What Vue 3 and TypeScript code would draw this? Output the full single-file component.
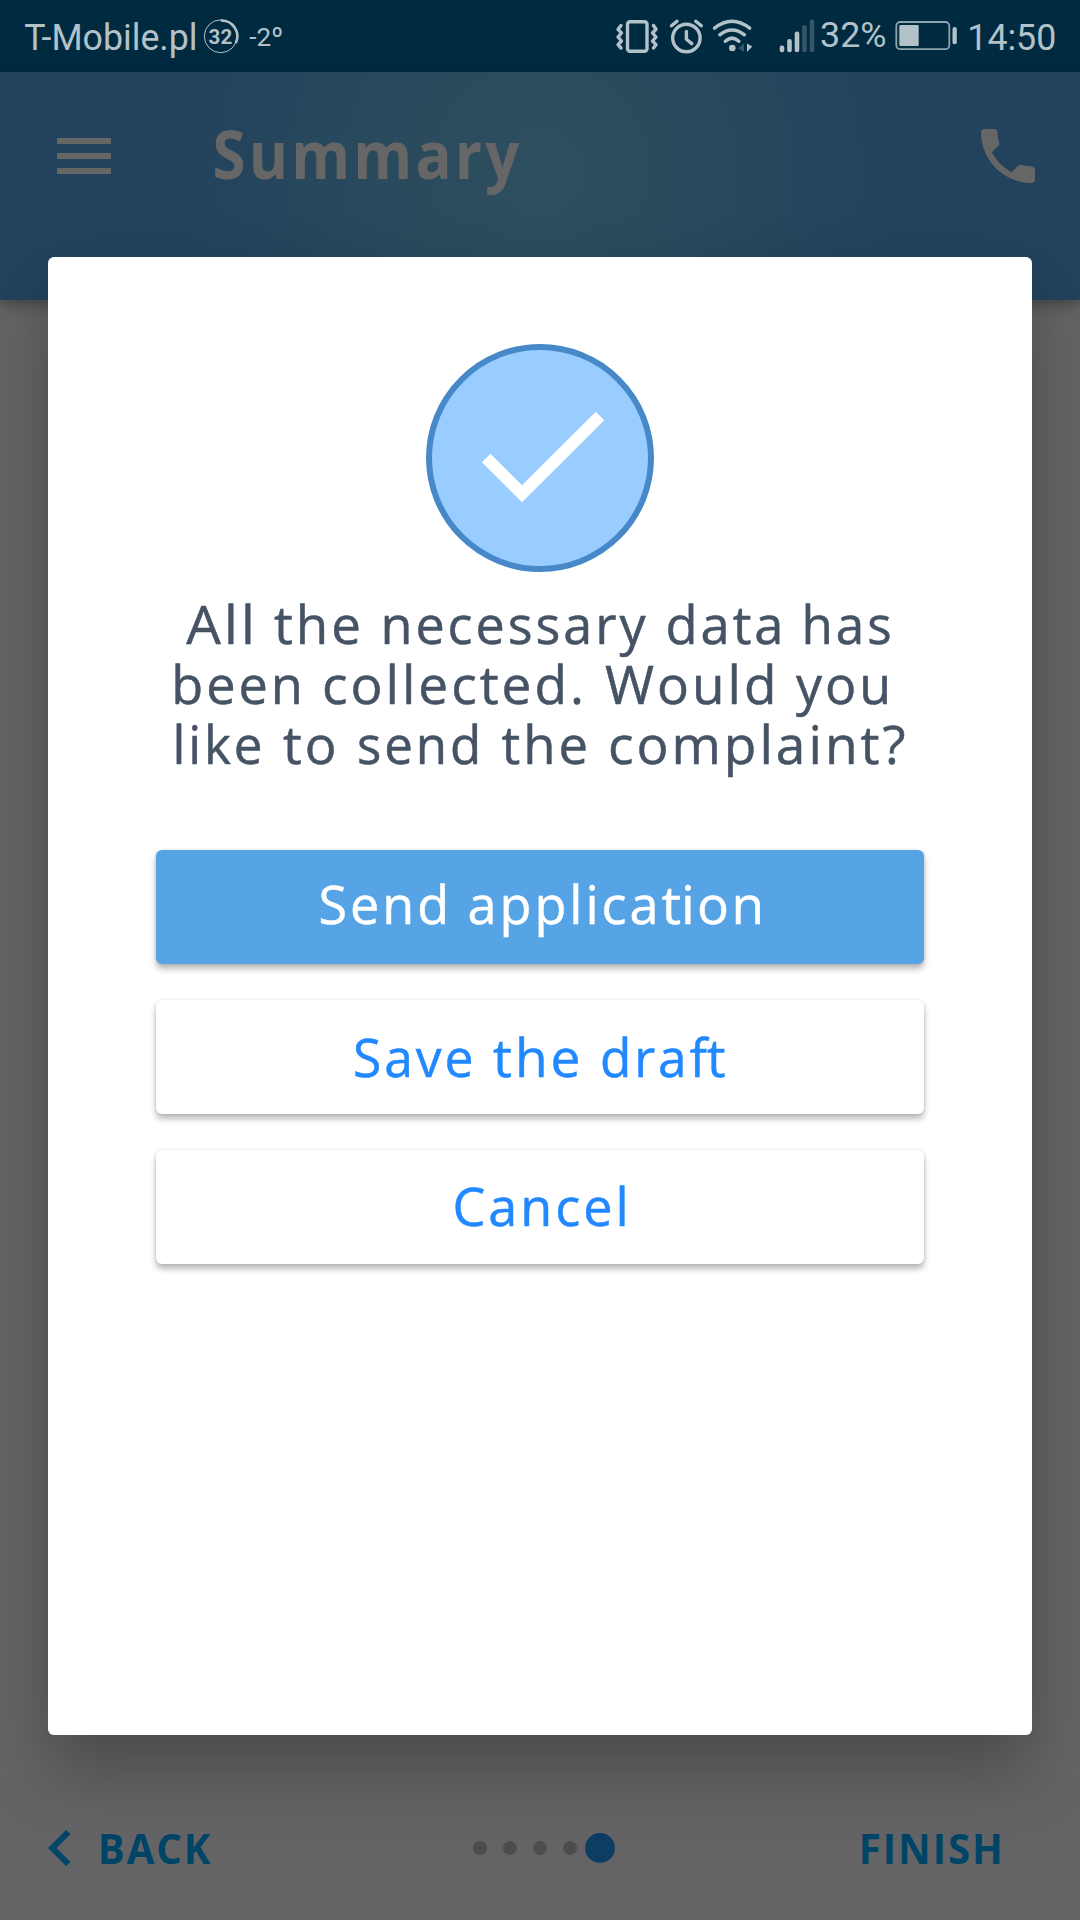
<script setup lang="ts">
import { h, type FunctionalComponent } from 'vue'

interface Word {
  t: string
  x: number
  w: number
  ls?: number
}

interface Line {
  y: number
  words: Word[]
}

interface FitTextProps {
  box: [number, number, number, number]
  lines: Line[]
}

// Text set word by word to a fixed measure, so it keeps its width in any fallback font.
const FitText: FunctionalComponent<FitTextProps> = (props) =>
  h(
    'svg',
    { viewBox: props.box.join(' '), width: props.box[2], height: props.box[3] },
    props.lines.map((line) =>
      h(
        'text',
        { y: line.y },
        line.words.map((word, i) => [
          i > 0 && word.ls === undefined ? ' ' : '',
          h(
            'tspan',
            {
              x: word.x,
              textLength: word.w,
              lengthAdjust: 'spacingAndGlyphs',
              'letter-spacing': word.ls,
            },
            word.t,
          ),
        ]),
      ),
    ),
  )
FitText.props = ['box', 'lines']

const message: Line[] = [
  {
    y: 644,
    words: [
      { t: 'All', x: 186.3, w: 71.5 },
      { t: 'the', x: 274, w: 90 },
      { t: 'necessary', x: 380.5, w: 268 },
      { t: 'data', x: 665.5, w: 121 },
      { t: 'has', x: 801.5, w: 93 },
    ],
  },
  {
    y: 704,
    words: [
      { t: 'been', x: 171.3, w: 134.5 },
      { t: 'collected.', x: 322, w: 265 },
      { t: 'Would', x: 605, w: 174.5 },
      { t: 'you', x: 796, w: 98 },
    ],
  },
  {
    y: 764,
    words: [
      { t: 'like', x: 172.5, w: 93 },
      { t: 'to', x: 283, w: 56.5 },
      { t: 'send', x: 357, w: 127 },
      { t: 'the', x: 501.5, w: 89.5 },
      { t: 'complaint?', x: 608, w: 300.5 },
    ],
  },
]

interface Action {
  id: string
  primary: boolean
  top: number
  line: Line
}

const actions: Action[] = [
  {
    id: 'send',
    primary: true,
    top: 850,
    line: {
      y: 924,
      words: [
        { t: 'Send', x: 318.5, w: 133.5 },
        { t: 'applica', x: 467.5, w: 194 },
        { t: 'ti', x: 661.5, w: 33.5, ls: 0 },
        { t: 'on', x: 697, w: 69.5, ls: 2.5 },
      ],
    },
  },
  {
    id: 'draft',
    primary: false,
    top: 1000,
    line: {
      y: 1077,
      words: [
        { t: 'Save', x: 353, w: 123.5 },
        { t: 'the', x: 493, w: 90.5 },
        { t: 'dra', x: 600, w: 89.5 },
        { t: 'ft', x: 689.5, w: 36, ls: 0 },
      ],
    },
  },
  {
    id: 'cancel',
    primary: false,
    top: 1150,
    line: { y: 1226, words: [{ t: 'Cancel', x: 452.5, w: 179 }] },
  },
]

const title: Line[] = [{ y: 178.7, words: [{ t: 'Summary', x: 212.5, w: 310 }] }]
const back: Line[] = [{ y: 1863.7, words: [{ t: 'BACK', x: 97.8, w: 114.5 }] }]
const finish: Line[] = [{ y: 1863.7, words: [{ t: 'FINISH', x: 858.8, w: 146 }] }]
const carrier: Line[] = [{ y: 50, words: [{ t: 'T-Mobile.pl', x: 24.3, w: 173.2 }] }]
const temperature: Line[] = [{ y: 46.3, words: [{ t: '-2º', x: 249.3, w: 33.7 }] }]
const charge: Line[] = [{ y: 46.7, words: [{ t: '32%', x: 820, w: 66.5 }] }]
const clock: Line[] = [{ y: 50, words: [{ t: '14:50', x: 967.3, w: 89 }] }]

const signal = [
  { x: 782, top: 45.5, on: true },
  { x: 789.5, top: 39, on: true },
  { x: 797, top: 31.5, on: true },
  { x: 804.5, top: 25, on: false },
  { x: 812, top: 19.5, on: false },
]

const steps = 5
</script>

<template>
  <div class="screen">
    <header class="status">
      <div class="status-side">
        <FitText class="s36" :box="[0, 0, 200, 72]" :lines="carrier" />
        <svg viewBox="200 0 44 72" width="44" height="72">
          <circle cx="220.7" cy="36.3" r="16.4" class="ring thin" />
          <path d="M220.7 20.5A15.8 15.8 0 0 1 235.8 43" class="ring" />
          <text x="208.6" y="43.8" textLength="23.6" lengthAdjust="spacingAndGlyphs" class="badge">32</text>
        </svg>
        <FitText class="s26" :box="[244, 0, 50, 72]" :lines="temperature" />
      </div>
      <div class="status-side">
        <svg viewBox="612 0 50 72" width="50" height="72" class="line">
          <rect x="627.5" y="21.7" width="19.5" height="29.6" rx="2.5" />
          <path d="M621 25.5 618 29.3 621.5 33 618 37 621.5 41 618 44.7 621 48" />
          <path d="M653.5 25.5 656 29.3 652.5 33 656 37 652.5 41 656 44.7 653.5 48" />
        </svg>
        <svg viewBox="662 0 48 72" width="48" height="72" class="line">
          <circle cx="686.4" cy="38" r="13.7" />
          <path d="M686.4 31.5V39.2L691.8 43.6M671.5 25.8 677 21.2M701.3 25.8 695.8 21.2" />
        </svg>
        <svg viewBox="710 0 50 72" width="50" height="72" class="line">
          <path d="M714.5 28.2Q732 14.3 749.7 28.2M719.8 34.8Q732 25 744.4 34.8M725.3 41.3Q732 35 738.9 41.3" />
          <circle cx="732.3" cy="48" r="3.3" class="fill" />
          <path d="M744 43.5V52L738 48.3Z" class="fill dim" />
          <path d="M747 43.5V52L752.3 46.5Z" class="fill" />
        </svg>
        <svg viewBox="760 0 57 72" width="57" height="72">
          <rect
            v-for="bar in signal"
            :key="bar.x"
            :x="bar.x - 2.3"
            :y="bar.top"
            width="4.6"
            :height="52.2 - bar.top"
            rx="2.2"
            :class="bar.on ? 'fill' : 'fill dim'"
          />
        </svg>
        <FitText class="s35" :box="[817, 0, 73, 72]" :lines="charge" />
        <svg viewBox="890 0 72 72" width="72" height="72">
          <rect x="896.3" y="22" width="53" height="27.2" rx="4" class="case" />
          <rect x="899.3" y="25" width="19.4" height="21" rx="1" class="fill" />
          <rect x="952.5" y="27" width="4.3" height="17.3" rx="2.1" class="fill" />
        </svg>
        <FitText class="s36" :box="[962, 0, 118, 72]" :lines="clock" />
      </div>
    </header>

    <div class="appbar">
      <svg viewBox="45 72 78 168" width="78" height="168" class="glyph">
        <path d="M57 138h54v6H57zM57 153h54v6H57zM57 168h54v6H57z" />
      </svg>
      <FitText class="title" :box="[123, 72, 500, 168]" :lines="title" />
      <svg viewBox="0 0 24 24" width="72" height="72" class="glyph phone">
        <path
          d="M6.62 10.79c1.44 2.83 3.76 5.14 6.59 6.59l2.2-2.2c.27-.27.67-.36 1.02-.24 1.12.37 2.33.57 3.57.57.55 0 1 .45 1 1V20c0 .55-.45 1-1 1-9.39 0-17-7.61-17-17 0-.55.45-1 1-1h3.5c.55 0 1 .45 1 1 0 1.25.2 2.45.57 3.57.11.35.03.74-.25 1.02l-2.2 2.2z"
        />
      </svg>
    </div>

    <main class="body"></main>

    <footer class="footer">
      <div class="nav">
        <svg viewBox="40 1776 50 144" width="50" height="144">
          <path d="M68.3 1832 52.3 1848 68.3 1864" class="chevron" />
        </svg>
        <FitText class="nav-text" :box="[90, 1776, 150, 144]" :lines="back" />
      </div>
      <div class="dots">
        <span v-for="n in steps" :key="n" class="slot">
          <i :class="n === steps ? 'dot active' : 'dot'"></i>
        </span>
      </div>
      <div class="nav end">
        <FitText class="nav-text" :box="[840, 1776, 240, 144]" :lines="finish" />
      </div>
    </footer>

    <section class="dialog" role="dialog">
      <svg viewBox="426 344 228 228" width="228" height="228" class="done">
        <circle cx="540" cy="458" r="111" />
        <path d="M486.2 458 522 493.8 600 416" />
      </svg>
      <FitText class="message" :box="[48, 572, 984, 278]" :lines="message" />
      <div class="actions">
        <button v-for="a in actions" :key="a.id" :class="a.primary ? 'action primary' : 'action'">
          <FitText :box="[156, a.top, 768, 114]" :lines="[a.line]" />
        </button>
      </div>
    </section>
  </div>
</template>

<style>
body {
  margin: 0;
}
</style>

<style scoped>
.screen {
  position: relative;
  display: flex;
  flex-direction: column;
  width: 1080px;
  height: 1920px;
  overflow: hidden;
  background: #656565;
  font-family: 'Open Sans', 'Noto Sans', sans-serif;
}

svg {
  display: block;
  flex: none;
}

.status {
  display: flex;
  justify-content: space-between;
  height: 72px;
  background: #002a40;
  font-family: Roboto, sans-serif;
}

.status-side {
  display: flex;
  fill: #b3c2c9;
}

.s36 {
  font-size: 36px;
}

.s35 {
  font-size: 35px;
}

.s26 {
  font-size: 26.5px;
}

.badge {
  font-size: 20.5px;
  font-weight: 700;
}

.ring {
  fill: none;
  stroke: #b3c2c9;
  stroke-width: 2.6;
}

.ring.thin {
  stroke-width: 1;
}

.line {
  fill: none;
  stroke: #b3c2c9;
  stroke-width: 3.4;
  stroke-linecap: round;
  stroke-linejoin: round;
}

.fill {
  fill: #b3c2c9;
  stroke: none;
}

.fill.dim {
  fill: #365566;
}

.case {
  fill: none;
  stroke: #8fa3ad;
  stroke-width: 1.8;
}

.appbar {
  z-index: 1;
  display: flex;
  height: 228px;
  padding: 0 36px 0 45px;
  box-sizing: border-box;
  background: radial-gradient(circle 365px at 540px 100px, #2e4f5e 0%, #2a4a5d 42%, #25455d 78%, #23425d 100%);
  box-shadow: 0 4px 14px rgba(0, 0, 0, 0.35);
}

.glyph {
  fill: #666;
}

.phone {
  margin: 48px 0 0 auto;
}

.title {
  font-size: 66px;
  font-weight: 700;
  letter-spacing: 3.5px;
  fill: #666;
}

.body {
  flex: 1;
}

.footer {
  display: grid;
  grid-template-columns: 1fr 150px 1fr;
  height: 144px;
  background: #646466;
}

.nav {
  display: flex;
  padding-left: 40px;
}

.nav.end {
  justify-content: flex-end;
  padding: 0;
}

.nav-text {
  font-size: 41.5px;
  font-weight: 700;
  letter-spacing: 2px;
  fill: #004466;
}

.chevron {
  fill: none;
  stroke: #004466;
  stroke-width: 6;
}

.dots {
  display: flex;
  align-items: center;
}

.slot {
  display: flex;
  justify-content: center;
  width: 30px;
}

.dot {
  width: 14.6px;
  height: 14.6px;
  border-radius: 50%;
  background: #4d4d4d;
}

.dot.active {
  width: 30px;
  height: 30px;
  background: #0e3d63;
}

.dialog {
  position: absolute;
  z-index: 2;
  top: 257px;
  left: 48px;
  display: flex;
  flex-direction: column;
  align-items: center;
  width: 984px;
  height: 1478px;
  padding-top: 87px;
  box-sizing: border-box;
  border-radius: 6px;
  background: #fff;
  box-shadow: 0 34px 68px rgba(0, 0, 0, 0.27);
}

.done circle {
  fill: #99ccff;
  stroke: #4789c8;
  stroke-width: 6;
}

.done path {
  fill: none;
  stroke: #fff;
  stroke-width: 12;
}

.message,
.action {
  font-size: 53.4px;
  letter-spacing: 3px;
  stroke-width: 0.5px;
}

.message {
  fill: #455364;
  stroke: #455364;
}

.actions {
  display: flex;
  flex-direction: column;
  gap: 36px;
}

.action {
  width: 768px;
  height: 114px;
  padding: 0;
  border: 0;
  border-radius: 6px;
  background: #fff;
  box-shadow: 0 5px 6px rgba(0, 0, 0, 0.27), 0 0 3px rgba(0, 0, 0, 0.14);
  font-family: inherit;
  fill: #2288ff;
  stroke: #2288ff;
}

.action.primary {
  background: #56a3e6;
  fill: #fff;
  stroke: #fff;
}
</style>
